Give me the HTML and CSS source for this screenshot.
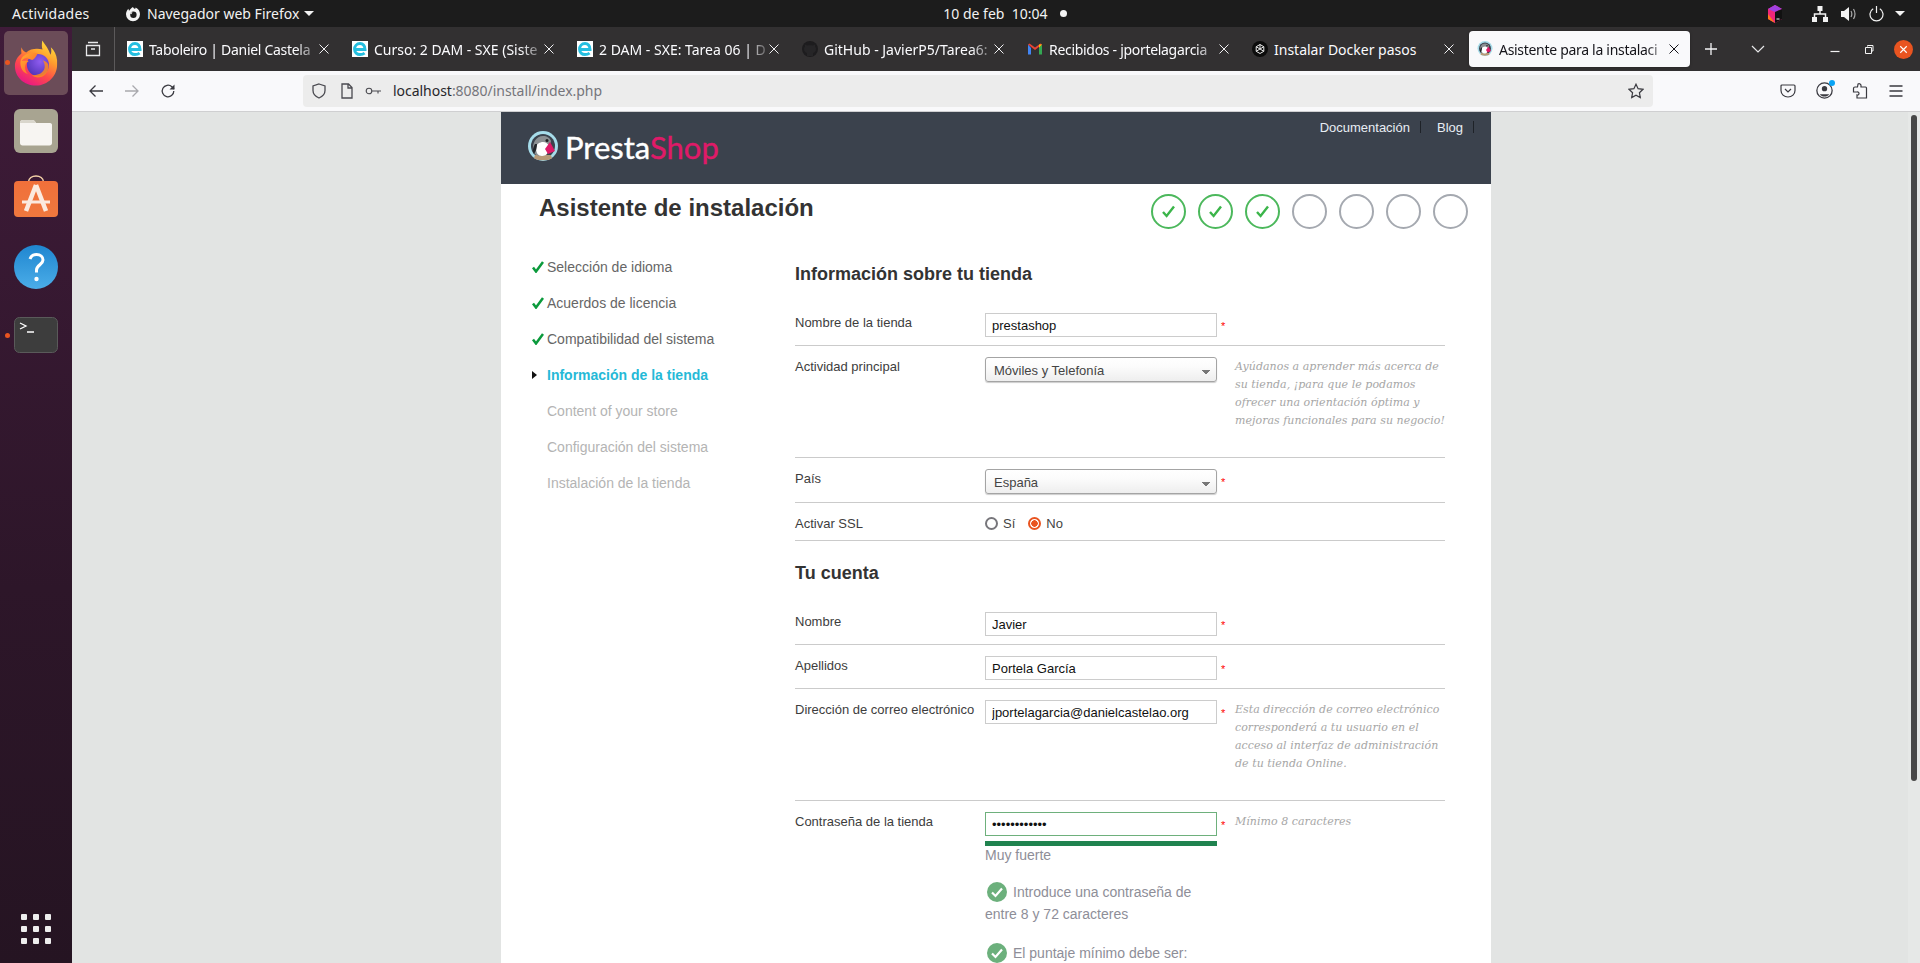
FILE: index.html
```html
<!DOCTYPE html>
<html lang="es">
<head>
<meta charset="utf-8">
<title>Asistente para la instalación</title>
<link rel="stylesheet" href="styles.css">
</head>
<body>
<svg class="defs" width="0" height="0" aria-hidden="true">
  <defs>
    <linearGradient id="fxOuter" x1="0.8" y1="0" x2="0.25" y2="1">
      <stop offset="0" stop-color="#ffe53b"/><stop offset="0.35" stop-color="#ff9a2e"/><stop offset="0.65" stop-color="#ff4a4a"/><stop offset="1" stop-color="#e5138a"/>
    </linearGradient>
    <linearGradient id="fxFox" x1="0" y1="0" x2="1" y2="1">
      <stop offset="0" stop-color="#ffb02e"/><stop offset="1" stop-color="#ff5a2c"/>
    </linearGradient>
    <radialGradient id="fxGlobe" cx="0.6" cy="0.35" r="0.8">
      <stop offset="0" stop-color="#8f5cf0"/><stop offset="1" stop-color="#4a2fb0"/>
    </radialGradient>
    <linearGradient id="storeBg" x1="0" y1="0" x2="0" y2="1">
      <stop offset="0" stop-color="#f0703a"/><stop offset="1" stop-color="#f0783e"/>
    </linearGradient>
    <linearGradient id="helpBg" x1="0" y1="0" x2="0" y2="1">
      <stop offset="0" stop-color="#1f86d0"/><stop offset="1" stop-color="#4bade8"/>
    </linearGradient>
    <symbol id="edu" viewBox="0 0 16 16">
      <rect width="16" height="16" fill="#fff"/>
      <path d="M3 8.600h10C13 4.600 10.800 2.600 8 2.600 4.800 2.600 2.600 5 2.600 8.300c0 3.200 2.400 5.300 5.400 5.300 1.800 0 3.300-.5 4.600-1.500" fill="none" stroke="#25bfe0" stroke-width="3"/>
    </symbol>
    <symbol id="penguin" viewBox="0 0 32 32">
      <circle cx="16" cy="15" r="15" fill="#a6dcea"/>
      <circle cx="16" cy="15" r="12" fill="#3b424d"/>
      <path d="M7 27c2 3 16 3 18 0l-1-3H8z" fill="#b79a78"/>
      <path d="M6 20C5 12 9 5 16 5c4 0 7 2 8 5l-2 9c-1 4-4 6-8 6-4 0-7-2-8-5z" fill="#8b8f92"/>
      <path d="M9 17c0-4 4-6 7-6 3 0 5 2 6 4l-1 6c-1 3-4 4-6 4-4 0-6-3-6-8z" fill="#fff"/>
      <circle cx="20" cy="9.500" r="1.500" fill="#222"/>
      <path d="M8 13c-2 3-3 8-1 10 2-3 3-6 3-10z" fill="#22262b"/>
      <path d="M18 18l5-7 5 9-7 3z" fill="#df1a68"/>
    </symbol>
    <symbol id="x" viewBox="0 0 16 16">
      <path d="M3.500 3.500l9 9M12.500 3.500l-9 9" fill="none" stroke="currentColor" stroke-width="1"/>
    </symbol>
    <symbol id="tick" viewBox="0 0 12 12">
      <path d="M1 6.500l3 4L11 1" fill="none" stroke="#0b9a3c" stroke-width="2.500"/>
    </symbol>
    <symbol id="ok" viewBox="0 0 20 20">
      <circle cx="10" cy="10" r="10" fill="#6cb07c"/>
      <path d="M5 10.500l3.500 3.500L15 6.500" fill="none" stroke="#fff" stroke-width="2.200"/>
    </symbol>
    <symbol id="ring" viewBox="0 0 19 19">
      <path d="M4 10l3.600 4L15 4.500" fill="none" stroke="#3bb54a" stroke-width="2.400"/>
    </symbol>
  </defs>
</svg>

<header class="topbar">
  <span class="top-act">Actividades</span>
  <span class="top-app">
    <svg class="top-ff" viewBox="0 0 16 16"><path d="M8 1c.5 1 1 1.500 2 2 .5-.5.600-1 .6-1.500C13.500 3 15 5.400 15 8.200A7 7 0 0 1 1 8.200C1 6 2 4 3.600 2.700 3.500 3.600 3.700 4.200 4.200 4.800 5 3.200 6.400 2 8 1z" fill="#f4f4f4"/><circle cx="8.400" cy="8.800" r="3.200" fill="#1c1c1c"/><path d="M4.500 7c1-.8 2-1 3-.6L6.200 8.200z" fill="#f4f4f4"/></svg>
    <span>Navegador web Firefox</span>
    <span class="top-tri"></span>
  </span>
  <span class="top-clock">10 de feb&nbsp;&nbsp;10:04</span>
  <span class="top-dot"></span>
  <span class="top-tray">
    <svg class="tray-jb" viewBox="0 0 14 18"><path d="M0 4l7-4 7 4v10l-7 4-7-4z" fill="#f0267a"/><path d="M0 4l7-4 7 4-7 3z" fill="#a040e0"/><path d="M7 7l7-3v10l-7 4z" fill="#111"/><path d="M0 9l7 9-7-4z" fill="#ff7a1a"/><path d="M8.500 14h3" stroke="#fff"/></svg>
    <svg class="tray-net" viewBox="0 0 16 16"><path d="M5.500 0h5v5h-5zM0 11h5v5H0zM11 11h5v5h-5z" fill="#f2f2f2"/><path d="M8 5v3M2.500 11V8h11v3" fill="none" stroke="#f2f2f2" stroke-width="1.500"/></svg>
    <svg class="tray-vol" viewBox="0 0 15 16"><path d="M0 5h3l5-4v14l-5-4H0z" fill="#f2f2f2"/><path d="M10 5c1 1.800 1 4.200 0 6M12.500 3c1.800 3 1.800 7 0 10" fill="none" stroke="#aaa" stroke-width="1.200"/></svg>
    <svg class="tray-pow" viewBox="0 0 15 16"><path d="M4.200 2.800a6.500 6.500 0 1 0 6.600 0M7.500 0v7" fill="none" stroke="#f2f2f2" stroke-width="1.200"/></svg>
    <span class="top-tri tray-tri"></span>
  </span>
</header>

<div class="desk">
  <nav class="dock">
    <div class="dock-item dock-active">
      <span class="dock-run"></span>
      <svg class="dock-ff" viewBox="0 0 48 48">
        <path d="M46 21c-.6-5.500-3-10.500-6.500-13.500 .8 3.300.6 6-.4 8C37.500 9.500 33.800 5.500 30.500 .5c-.5 4-.6 7 .3 9.500-5-1.500-12.500-1.200-17 3-2-.6-4-2.500-5-5.500-.3 2.300-.4 4.500 0 6.500C5 17 2 21.500 2 27c0 11.500 9.500 20.500 22 20.500S46 37 46 26c0-1.700 0-3.400 0-5z" fill="url(#fxOuter)"/>
        <circle cx="26" cy="26" r="11.500" fill="url(#fxGlobe)"/>
        <path d="M26 14c-5-1.500-13-.5-17 5-2 3-1.500 8 .5 12 1 2 3 3.500 6 4.500-2.500-3-3.500-6-2.500-9.500 1-2.500 2-3 3.500-4-2-.5-5-.6-7.500-.2 2-2.500 4-3 6-3.500 1 1.500 3 2 5 2.500 2-.5 3.500-2.500 6-7.300z" fill="url(#fxFox)"/>
        <path d="M37 27c0 7-5 12-11 12-2.500 0-5-1-6.500-2.500 6 1 12.500-2 13.500-7.500.5-3-.5-6-2-8 3.500 1 6 3.200 6 6z" fill="#ff8a1f" opacity=".85"/>
      </svg>
    </div>
    <div class="dock-item dock-files">
      <svg class="dock-ico" viewBox="0 0 44 44"><rect width="44" height="44" rx="6" fill="#a8a491"/><path d="M6 14c0-2 1-3 3-3h9c2 0 3 1 4 3h14c1.500 0 2 1 2 2v18c0 1.500-1 2.500-2.500 2.500h-27C7 36.500 6 35.500 6 34z" fill="#f7f5f2"/><path d="M6 14c0-2 1-3 3-3h9c2 0 3 1 4 3z" fill="#d9d6cc"/></svg>
    </div>
    <div class="dock-item dock-store">
      <svg class="dock-store-ico" viewBox="0 0 44 42"><path d="M14.500 7c0-8 15-8 15 0" fill="none" stroke="#f5d3a8" stroke-width="1.500"/><rect y="6" width="44" height="36" rx="4" fill="url(#storeBg)"/><path d="M22 10L12 36M22 10l10 26" stroke="#fbeadf" stroke-width="4.500" fill="none"/><path d="M8 27h28" stroke="#fbeadf" stroke-width="3"/></svg>
    </div>
    <div class="dock-item dock-help">
      <svg class="dock-ico" viewBox="0 0 44 44"><circle cx="22" cy="22" r="22" fill="url(#helpBg)"/><path d="M16 14c1-3 3-4.500 6.500-4.500 4 0 6.500 2.500 6.500 5.500 0 4.500-6.500 5-6.500 10v2.500" fill="none" stroke="#fff" stroke-width="3"/><circle cx="22.500" cy="34" r="2.200" fill="#fff"/></svg>
    </div>
    <div class="dock-item dock-term">
      <span class="dock-run dock-run-term"></span>
      <svg class="dock-term-ico" viewBox="0 0 44 36"><rect x=".5" y=".5" width="43" height="35" rx="5" fill="#3d3d3d" stroke="#5a5a5a"/><path d="M6 6l6 3-6 3" fill="none" stroke="#fff" stroke-width="1.300"/><path d="M13 15h7" stroke="#fff" stroke-width="1.500"/></svg>
    </div>
    <div class="dock-grid">
      <i></i><i></i><i></i><i></i><i></i><i></i><i></i><i></i><i></i>
    </div>
  </nav>

  <div class="window">
    <div class="tabstrip">
      <div class="fview">
        <svg viewBox="0 0 16 16"><path d="M3 1.500h10M1.500 4.500h13v10h-13zM6 8h4" fill="none" stroke="#e8e8ea" stroke-width="1.300"/></svg>
      </div>
      <div class="tab">
        <svg class="fav"><use href="#edu"/></svg><span class="tab-title tab-tight">Taboleiro | Daniel Castela</span><svg class="tab-x"><use href="#x"/></svg>
      </div>
      <div class="tab">
        <svg class="fav"><use href="#edu"/></svg><span class="tab-title">Curso: 2 DAM - SXE (Siste</span><svg class="tab-x"><use href="#x"/></svg>
      </div>
      <div class="tab">
        <svg class="fav"><use href="#edu"/></svg><span class="tab-title">2 DAM - SXE: Tarea 06 | D</span><svg class="tab-x"><use href="#x"/></svg>
      </div>
      <div class="tab">
        <svg class="fav" viewBox="0 0 16 16"><circle cx="8" cy="8" r="8" fill="#1d1c1e"/><path d="M5 15v-3c-2-.5-3-2-3-4 0-1 .4-2 1-2.600V3.500l2 1c2-.5 4-.5 6 0l2-1v1.900c.6.600 1 1.600 1 2.600 0 2-1 3.500-3 4v3z" fill="#262527"/></svg><span class="tab-title">GitHub - JavierP5/Tarea6:</span><svg class="tab-x"><use href="#x"/></svg>
      </div>
      <div class="tab">
        <svg class="fav" viewBox="0 0 16 16"><path d="M1 3.500v10h3V7z" fill="#4285f4"/><path d="M12 7v6.500h3v-10z" fill="#34a853"/><path d="M1 3.500L8 9l7-5.500-1.500-1L8 6.500 2.500 2.500z" fill="#ea4335"/><path d="M12 3.500l3 0-3 3.500z" fill="#fbbc04"/></svg><span class="tab-title tab-tight">Recibidos - jportelagarcia</span><svg class="tab-x"><use href="#x"/></svg>
      </div>
      <div class="tab">
        <svg class="fav" viewBox="0 0 16 16"><circle cx="8" cy="8" r="8" fill="#0c0c0c"/><path d="M8 3.500l3.800 2.200v4.600L8 12.500l-3.800-2.200V5.700zM8 3.500v4.500l3.800 2.300M8 8l-3.800 2.300M4.200 5.700L8 8l3.800-2.300" fill="none" stroke="#e8e8e8" stroke-width="1"/></svg><span class="tab-title tab-title-full">Instalar Docker pasos</span><svg class="tab-x"><use href="#x"/></svg>
      </div>
      <div class="tab tab-active">
        <svg class="fav"><use href="#penguin"/></svg><span class="tab-title tab-tight">Asistente para la instalaci</span><svg class="tab-x"><use href="#x"/></svg>
      </div>
      <div class="strip-btn">
        <svg viewBox="0 0 16 16"><path d="M8 2v12M2 8h12" stroke="#f4f4f6" stroke-width="1.300"/></svg>
      </div>
      <div class="strip-btn strip-chev">
        <svg viewBox="0 0 16 16"><path d="M2 5l6 6 6-6" fill="none" stroke="#e8e8ea" stroke-width="1.200"/></svg>
      </div>
      <div class="winctl">
        <span class="winbtn"><svg viewBox="0 0 16 16"><path d="M3.500 10.500h9" stroke="#f4f4f4" stroke-width="1.200"/></svg></span>
        <span class="winbtn"><svg viewBox="0 0 16 16"><path d="M6.500 5.500V4.500H12V10h-1.500M4.500 6.500h6v6h-6z" fill="none" stroke="#f4f4f4"/></svg></span>
        <span class="winbtn"><span class="winclose"><svg viewBox="0 0 16 16"><path d="M4 4l8 8M12 4l-8 8" stroke="#fff" stroke-width="1.400"/></svg></span></span>
      </div>
    </div>

    <div class="toolbar">
      <span class="tool"><svg viewBox="0 0 16 16"><path d="M15 8H2M7.500 2.500L2 8l5.500 5.500" fill="none" stroke="#3a3a40" stroke-width="1.300"/></svg></span>
      <span class="tool"><svg viewBox="0 0 16 16"><path d="M1 8h13M8.500 2.500L14 8l-5.500 5.500" fill="none" stroke="#a9a9ad" stroke-width="1.300"/></svg></span>
      <span class="tool"><svg viewBox="0 0 16 16"><path d="M13.800 8a5.800 5.800 0 1 1-1.900-4.300L14 6" fill="none" stroke="#3a3a40" stroke-width="1.300"/><path d="M14.500 1.500V6.500H9.500z" fill="#3a3a40"/></svg></span>
      <div class="urlbar">
        <svg class="url-ico" viewBox="0 0 16 16"><path d="M8 1l6 2v4.500c0 3.500-2.500 6-6 7.500-3.500-1.500-6-4-6-7.500V3z" fill="none" stroke="#4a4a50" stroke-width="1.300"/></svg>
        <svg class="url-ico url-page" viewBox="0 0 16 16"><path d="M3 1h6.500L13 4.500V15H3zM9 1v4h4" fill="none" stroke="#4a4a50" stroke-width="1.300"/></svg>
        <svg class="url-ico url-key" viewBox="0 0 16 16"><circle cx="4" cy="8" r="2.800" fill="none" stroke="#4a4a50" stroke-width="1.100"/><path d="M7 8h9M13 8v2.500" fill="none" stroke="#4a4a50" stroke-width="1.100"/></svg>
        <span class="url-text">localhost<span class="url-dim">:8080/install/index.php</span></span>
        <svg class="url-ico url-star" viewBox="0 0 16 16"><path d="M8 1.200l2.100 4.500 4.900.6-3.600 3.400.9 4.900L8 12.200l-4.300 2.400.9-4.900L1 6.300l4.900-.6z" fill="none" stroke="#3a3a40" stroke-width="1.200"/></svg>
      </div>
      <div class="tools-right">
        <span class="tool"><svg viewBox="0 0 16 16"><path d="M2 2h12c.6 0 1 .4 1 1v4.500c0 3.500-3 6.500-7 6.500S1 11 1 7.500V3c0-.6.4-1 1-1z" fill="none" stroke="#3a3a40" stroke-width="1.200"/><path d="M5 6l3 3 3-3" fill="none" stroke="#3a3a40" stroke-width="1.200"/></svg></span>
        <span class="tool tool-acct">
          <svg viewBox="0 0 16 16"><circle cx="8" cy="8" r="7.200" fill="none" stroke="#3a3a40" stroke-width="1.200"/><circle cx="8" cy="6.300" r="2.500" fill="#3a3a40"/><path d="M3.500 11.500h9c-1 1.600-2.700 2.200-4.500 2.200s-3.500-.6-4.500-2.200z" fill="#3a3a40"/></svg>
          <span class="acct-dot"></span>
        </span>
        <span class="tool"><svg viewBox="0 0 16 16"><path d="M6 1c1.500-.8 3 .2 3 1.500V4h4.500c.5 0 1 .4 1 1v10H5V12c1 .4 2-.4 2-1.500S6 8.600 5 9L1.500 9V5.500c0-.8.5-1.500 1.500-1.500h2.500c.2-1 .5-2.500.5-3z" fill="none" stroke="#3a3a40" stroke-width="1.200"/></svg></span>
        <span class="tool"><svg viewBox="0 0 16 16"><path d="M1.500 3h13M1.500 8h13M1.500 13h13" stroke="#3a3a40" stroke-width="1.300"/></svg></span>
      </div>
    </div>

    <div class="viewport">
      <div class="canvas">
        <main class="page">
          <div class="ps-header">
            <div class="ps-logo">
              <svg class="ps-mark"><use href="#penguin"/></svg>
              <span class="ps-word">Presta<span class="ps-pink">Shop</span></span>
            </div>
            <ul class="ps-links">
              <li>Documentación</li>
              <li>Blog</li>
            </ul>
          </div>
          <div class="titlebar">
            <h1 class="title">Asistente de instalación</h1>
            <div class="steps">
              <span class="step step-done"><svg><use href="#ring"/></svg></span>
              <span class="step step-done"><svg><use href="#ring"/></svg></span>
              <span class="step step-done"><svg><use href="#ring"/></svg></span>
              <span class="step"></span>
              <span class="step"></span>
              <span class="step"></span>
              <span class="step"></span>
            </div>
          </div>
          <div class="content">
            <ol class="side">
              <li class="side-item side-done"><svg><use href="#tick"/></svg>Selección de idioma</li>
              <li class="side-item side-done"><svg><use href="#tick"/></svg>Acuerdos de licencia</li>
              <li class="side-item side-done"><svg><use href="#tick"/></svg>Compatibilidad del sistema</li>
              <li class="side-item side-now"><span class="side-caret"></span>Información de la tienda</li>
              <li class="side-item">Content of your store</li>
              <li class="side-item">Configuración del sistema</li>
              <li class="side-item">Instalación de la tienda</li>
            </ol>
            <form class="form">
              <h2 class="section section-first">Información sobre tu tienda</h2>
              <div class="row">
                <label class="lbl">Nombre de la tienda</label>
                <input class="field" type="text" value="prestashop">
                <span class="req">*</span>
              </div>
              <div class="row row-tall">
                <label class="lbl">Actividad principal</label>
                <select class="field pick"><option>Móviles y Telefonía</option></select>
                <span class="req req-none"></span>
                <p class="hint">Ayúdanos a aprender más acerca de su tienda, ¡para que le podamos ofrecer una orientación óptima y mejoras funcionales para su negocio!</p>
              </div>
              <div class="row">
                <label class="lbl">País</label>
                <select class="field pick"><option>España</option></select>
                <span class="req">*</span>
              </div>
              <div class="row row-radio">
                <label class="lbl">Activar SSL</label>
                <div class="radios">
                  <span class="radio"></span><span class="radio-text">Sí</span>
                  <span class="radio radio-on"></span><span class="radio-text">No</span>
                </div>
              </div>
              <h2 class="section">Tu cuenta</h2>
              <div class="row">
                <label class="lbl">Nombre</label>
                <input class="field" type="text" value="Javier">
                <span class="req">*</span>
              </div>
              <div class="row">
                <label class="lbl">Apellidos</label>
                <input class="field" type="text" value="Portela García">
                <span class="req">*</span>
              </div>
              <div class="row row-tall">
                <label class="lbl">Dirección de correo electrónico</label>
                <input class="field" type="text" value="jportelagarcia@danielcastelao.org">
                <span class="req">*</span>
                <p class="hint">Esta dirección de correo electrónico corresponderá a tu usuario en el acceso al interfaz de administración de tu tienda Online.</p>
              </div>
              <div class="row row-last">
                <label class="lbl">Contraseña de la tienda</label>
                <div class="pass">
                  <input class="field field-ok" type="password" value="abcdefghijkl">
                  <div class="meter"></div>
                  <div class="meter-text">Muy fuerte</div>
                  <p class="rule"><svg><use href="#ok"/></svg>Introduce una contraseña de entre 8 y 72 caracteres</p>
                  <p class="rule"><svg><use href="#ok"/></svg>El puntaje mínimo debe ser:</p>
                </div>
                <span class="req">*</span>
                <p class="hint">Mínimo 8 caracteres</p>
              </div>
            </form>
          </div>
        </main>
      </div>
      <div class="scroll"><div class="thumb"></div></div>
    </div>
  </div>
</div>
</body>
</html>
```
FILE: styles.css
```css
* { box-sizing: border-box; }
html, body { margin: 0; height: 963px; overflow: hidden; }
body { display: flex; flex-direction: column; font-family: "Liberation Sans", Arial, sans-serif; background: #1c1c1c; }
.defs { position: absolute; }

/* GNOME top bar */
.topbar { flex: 0 0 27px; display: flex; align-items: center; padding-left: 12px; background: #1c1c1c; color: #f2f2f2; font: 14px "Noto Sans", sans-serif; }
.top-act { width: 113px; flex: none; letter-spacing: .25px; }
.top-app { display: flex; align-items: center; flex: none; }
.top-ff { width: 16px; height: 16px; margin-right: 6px; }
.top-tri { display: inline-block; width: 0; height: 0; border: 5px solid transparent; border-top: 5px solid #f2f2f2; border-bottom: 0; margin-left: 5px; }
.top-clock { margin-left: 629px; flex: none; font-size: 14px; width: 104px; white-space: nowrap; }
.top-dot { width: 7px; height: 7px; border-radius: 50%; background: #f4f4f4; margin-left: 13px; flex: none; }
.top-tray { margin-left: auto; display: flex; align-items: center; padding-right: 15px; }
.tray-jb { width: 14px; height: 18px; margin-right: 30px; }
.tray-net { width: 16px; height: 16px; margin-right: 13px; }
.tray-vol { width: 15px; height: 16px; margin-right: 13px; }
.tray-pow { width: 15px; height: 16px; margin-right: 11px; }
.tray-tri { margin-left: 0; }

.desk { flex: 1; display: flex; min-height: 0; }

/* Dock */
.dock { flex: 0 0 72px; display: flex; flex-direction: column; align-items: center; padding-top: 4px; background: linear-gradient(180deg, #3f1b39 0%, #2d1629 60%, #251422 100%); }
.dock-item { width: 64px; display: flex; align-items: center; justify-content: center; border-radius: 5px; position: relative; flex: none; }
.dock-active { height: 64px; margin-bottom: 14px; background: #6b4c58; }
.dock-files { height: 44px; margin-bottom: 22px; }
.dock-store { height: 42px; margin-bottom: 28px; }
.dock-help { height: 44px; margin-bottom: 28px; }
.dock-term { height: 36px; }
.dock-run { position: absolute; left: 1px; top: 29px; width: 5px; height: 5px; border-radius: 50%; background: #e95420; }
.dock-run-term { top: 16px; }
.dock-ff { width: 46px; height: 48px; }
.dock-ico { width: 44px; height: 44px; }
.dock-store-ico { width: 44px; height: 42px; }
.dock-term-ico { width: 44px; height: 36px; }
.dock-grid { margin-top: auto; margin-bottom: 19px; display: grid; grid-template-columns: repeat(3, 6px); gap: 6px; }
.dock-grid i { width: 6px; height: 6px; border-radius: 1px; background: #eeeeee; display: block; }

/* Browser */
.window { flex: 1; min-width: 0; display: flex; flex-direction: column; }
.tabstrip { flex: 0 0 44px; display: flex; align-items: center; background: #323031; color: #fbfbfe; font: 14px "Noto Sans", sans-serif; }
.fview { width: 43px; height: 44px; border-right: 1px solid #5c5a5b; display: flex; align-items: center; justify-content: center; flex: none; margin-right: 4px; }
.fview svg { width: 16px; height: 16px; }
.tab { width: 221px; height: 36px; margin-right: 4px; padding: 0 8px; display: flex; align-items: center; flex: none; border-radius: 4px; }
.fav { width: 16px; height: 16px; flex: none; margin-right: 6px; }
.tab-title { flex: 1; min-width: 0; white-space: nowrap; -webkit-mask-image: linear-gradient(90deg, #000 88%, rgba(0,0,0,.25) 100%); mask-image: linear-gradient(90deg, #000 88%, rgba(0,0,0,.25) 100%); }
.tab-tight { letter-spacing: -.3px; }
.tab-title-full { -webkit-mask-image: none; mask-image: none; }
.tab-x { width: 16px; height: 16px; flex: none; color: #f0f0f2; }
.tab-active { background: #f9f9fb; color: #15141a; box-shadow: 0 0 3px rgba(0,0,0,.3); }
.tab-active .tab-x { color: #15141a; }
.strip-btn { width: 34px; height: 34px; display: flex; align-items: center; justify-content: center; flex: none; }
.strip-btn svg { width: 16px; height: 16px; }
.strip-chev { margin-left: 13px; }
.winctl { margin-left: auto; display: flex; align-items: center; }
.winbtn { width: 34px; height: 34px; display: flex; align-items: center; justify-content: center; }
.winbtn svg { width: 16px; height: 16px; }
.winclose { width: 19px; height: 19px; border-radius: 50%; background: #e95420; display: flex; align-items: center; justify-content: center; }
.winclose svg { width: 13px; height: 13px; }

.toolbar { flex: 0 0 41px; display: flex; align-items: center; padding: 0 6px 1px; background: #f9f9fb; border-bottom: 1px solid #cfcfd1; }
.tool { width: 36px; height: 32px; display: flex; align-items: center; justify-content: center; flex: none; position: relative; }
.tool svg { width: 16px; height: 16px; }
.tool-acct svg { width: 17px; height: 17px; }
.acct-dot { position: absolute; left: 23px; top: 5px; width: 6px; height: 6px; border-radius: 50%; background: #0aa4f5; }
.urlbar { margin-left: 117px; width: 1350px; height: 32px; flex: none; display: flex; align-items: center; padding: 0 9px 0 8px; background: #ececec; border-radius: 4px; }
.url-ico { width: 16px; height: 16px; flex: none; }
.url-page { margin-left: 12px; }
.url-key { margin-left: 10px; }
.url-text { margin-left: 12px; font: 14px "Noto Sans", sans-serif; letter-spacing: -.03px; color: #27272b; white-space: nowrap; }
.url-dim { color: #75757b; }
.url-star { margin-left: auto; }
.tools-right { margin-left: auto; display: flex; }

.viewport { flex: 1; min-height: 0; display: flex; background: #e2e4e3; overflow: hidden; }
.canvas { flex: 1; min-width: 0; padding-left: 429px; }
.scroll { flex: 0 0 12px; background: #e6e8e7; padding: 3px 3px 0; }
.thumb { width: 6px; height: 666px; border-radius: 3px; background: #484848; }

/* PrestaShop installer */
.page { width: 990px; background: #fff; min-height: 900px; }
.ps-header { height: 72px; background: #3b424d; display: flex; justify-content: space-between; padding-left: 26px; }
.ps-logo { display: flex; align-items: center; height: 72px; padding-bottom: 2px; }
.ps-mark { width: 32px; height: 32px; }
.ps-word { margin-left: 6px; font: 31px Lato, "Open Sans", sans-serif; color: #fff; -webkit-text-stroke: .4px currentColor; }
.ps-pink { color: #df1a68; }
.ps-links { list-style: none; margin: 0; padding: 9px 17px 0 0; display: flex; font-size: 13px; line-height: 15px; color: #e8edf4; }
.ps-links li { padding-right: 10px; margin-left: 16px; height: 12px; line-height: 14px; border-right: 1px solid #1e2228; }

.titlebar { height: 65px; display: flex; justify-content: space-between; padding: 0 23px 0 38px; }
.title { margin: 8px 0 0; font-size: 24px; line-height: 32px; font-weight: bold; color: #333; }
.steps { display: flex; gap: 12px; padding-top: 10px; }
.step { width: 35px; height: 35px; border-radius: 50%; border: 2px solid #a5a9b0; display: flex; align-items: center; justify-content: center; }
.step-done { border-color: #4cb85c; }
.step svg { width: 19px; height: 19px; }

.content { display: grid; grid-template-columns: 294px 650px; }
.side { list-style: none; margin: 0; padding: 0 0 0 46px; }
.side-item { height: 36px; line-height: 36px; font-size: 14px; color: #b4b4b4; position: relative; white-space: nowrap; }
.side-item svg { position: absolute; left: -15px; top: 12px; width: 12px; height: 12px; }
.side-done { color: #666; }
.side-now { color: #25b9d7; font-weight: bold; }
.side-caret { position: absolute; left: -15px; top: 14px; width: 0; height: 0; border: 4px solid transparent; border-left: 5px solid #111; border-right: 0; }

.form { color: #333; font-size: 13px; }
.section { margin: 0; padding: 21px 0 17px; font-size: 18px; line-height: 22px; font-weight: bold; color: #333; }
.section-first { padding-top: 14px; }
.row { display: flex; align-items: flex-start; padding: 11px 0 8px; border-bottom: 1px solid #cbcbcb; }
.row-tall { min-height: 112px; }
.row-radio { padding-bottom: 6px; }
.row-last { border-bottom: 0; }
.lbl { flex: 0 0 190px; line-height: 20px; color: #3d3d3d; white-space: nowrap; }
.field { flex: 0 0 232px; width: 232px; height: 24px; margin: 0; padding: 0 6px; border: 1px solid #ccc; background: #fff; font: 13px "Liberation Sans", Arial, sans-serif; color: #111; border-radius: 0; outline: 0; display: block; }
.field-ok { border-color: #6eb07c; }
.pick { height: 25px; padding: 2px 8px 0; appearance: none; -webkit-appearance: none; color: #444; border: 1px solid #a4a4a4; border-radius: 3px; background: linear-gradient(45deg, transparent 50%, #777 50%) 216px 12px / 4px 4px no-repeat, linear-gradient(-45deg, transparent 50%, #777 50%) 220px 12px / 4px 4px no-repeat, linear-gradient(180deg, #fff 0%, #fbfbfb 40%, #eeeeee 100%); box-shadow: 0 1px 1px rgba(0,0,0,.2); }
.req { flex: 0 0 18px; padding: 3px 0 0 4px; color: #f00; font-size: 11px; line-height: 20px; }
.req-none { color: transparent; }
.hint { flex: 1; margin: 1px 0 0; font: italic 11px/18px "DejaVu Serif", serif; color: #a6a6a6; letter-spacing: .04px; }
.radios { display: flex; align-items: center; height: 18px; color: #444; }
.radio { width: 13px; height: 13px; border: 2px solid #77767b; border-radius: 50%; background: #fff; }
.radio-on { border-color: #e95420; background: radial-gradient(circle, #e95420 0 3px, #fff 3.500px); margin-left: 13px; }
.radio-text { margin-left: 5px; }
.pass { flex: 0 0 232px; width: 232px; }
.meter { height: 5px; margin-top: 5px; background: #20834f; }
.meter-text { line-height: 18px; font-size: 14px; color: #8e8e98; }
.rule { margin: 17px 0 0; font-size: 14px; line-height: 22px; color: #8e8e98; }
.rule svg { width: 20px; height: 20px; margin: 0 6px -5px 2px; }
```
